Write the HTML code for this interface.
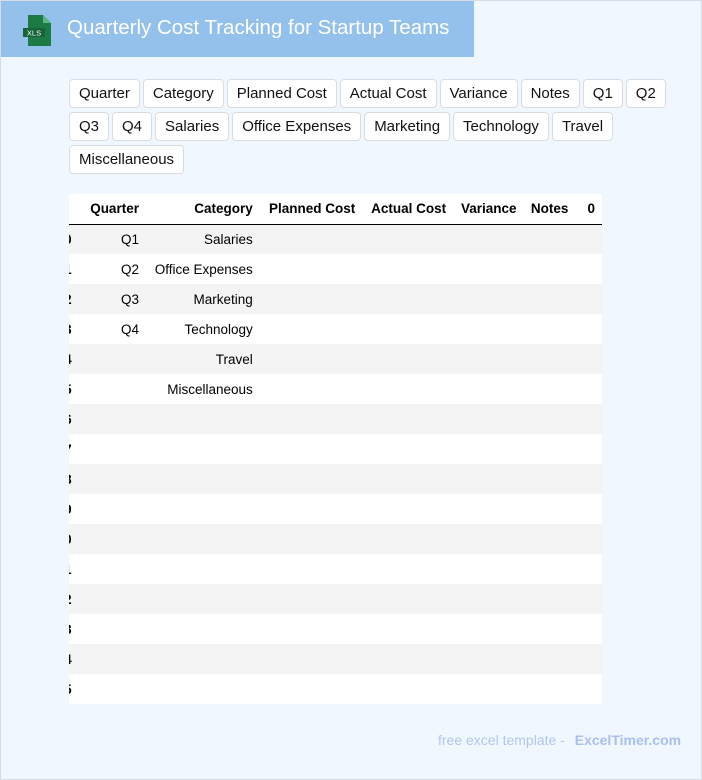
<!DOCTYPE html>
<html><head><meta charset="utf-8"><style>
*{box-sizing:border-box;margin:0;padding:0}
body{width:702px;height:780px;background:#f0f7ff;font-family:"Liberation Sans",Arial,sans-serif;position:relative;overflow:hidden;border:1px solid #d6dde6}
.hdr{position:absolute;left:0;top:0;width:473px;height:56px;background:#93c1ec}
.hdr .t{position:absolute;left:66px;top:15px;font-size:20.5px;color:#fff;white-space:nowrap}
.chips{position:absolute;left:68px;top:78px;width:610px;display:flex;flex-wrap:wrap;gap:4px 3px}
.chip{height:29px;line-height:27px;padding:0 9px;border:1px solid #d8dde3;border-radius:4px;background:#fff;font-size:15px;color:#111}
.wrap{position:absolute;left:68px;top:193px;width:533px;overflow:hidden}
table{border-collapse:collapse;margin-left:-23px;font-size:13.5px;table-layout:fixed}
td,th{height:30px;padding:0 7px;text-align:right;white-space:nowrap;color:#000;background:#fff}
th{font-weight:bold;border-bottom:1px solid #000}
tr.g td{background:#f4f4f4}
td:first-child{font-weight:bold;padding-right:3px}
.ft{position:absolute;left:437px;top:731px;font-size:14px;color:#b3c6ee}
.ft b{color:#a9c0ee;margin-left:6px}
</style></head><body>
<div class="hdr">
<svg style="position:absolute;left:20px;top:13px" width="32" height="33" viewBox="0 0 32 33"><path d="M7 1h15l8 8v23H7z" fill="#1e7a45"/><path d="M22 1v8h8z" fill="#5cb585"/><rect x="2" y="14" width="22" height="9" fill="#17633a"/><text x="13" y="21.5" font-size="7.5" fill="#fff" text-anchor="middle" font-family="Liberation Sans">XLS</text></svg>
<div class="t">Quarterly Cost Tracking for Startup Teams</div></div>
<div class="chips">
<span class="chip">Quarter</span><span class="chip">Category</span><span class="chip">Planned Cost</span><span class="chip">Actual Cost</span><span class="chip">Variance</span><span class="chip">Notes</span><span class="chip">Q1</span><span class="chip">Q2</span>
<span class="chip">Q3</span><span class="chip">Q4</span><span class="chip">Salaries</span><span class="chip">Office Expenses</span><span class="chip">Marketing</span><span class="chip">Technology</span><span class="chip">Travel</span>
<span class="chip">Miscellaneous</span></div>
<div class="wrap"><table>
<colgroup><col style="width:31px"><col style="width:77px"><col style="width:115px"><col style="width:104px"><col style="width:92px"><col style="width:71px"><col style="width:52px"><col style="width:30px"></colgroup>
<tr><th></th><th>Quarter</th><th>Category</th><th>Planned Cost</th><th>Actual Cost</th><th>Variance</th><th>Notes</th><th>0</th></tr>
<tr class="g"><td>0</td><td>Q1</td><td>Salaries</td><td></td><td></td><td></td><td></td><td></td></tr>
<tr><td>1</td><td>Q2</td><td>Office Expenses</td><td></td><td></td><td></td><td></td><td></td></tr>
<tr class="g"><td>2</td><td>Q3</td><td>Marketing</td><td></td><td></td><td></td><td></td><td></td></tr>
<tr><td>3</td><td>Q4</td><td>Technology</td><td></td><td></td><td></td><td></td><td></td></tr>
<tr class="g"><td>4</td><td></td><td>Travel</td><td></td><td></td><td></td><td></td><td></td></tr>
<tr><td>5</td><td></td><td>Miscellaneous</td><td></td><td></td><td></td><td></td><td></td></tr>
<tr class="g"><td>6</td><td></td><td></td><td></td><td></td><td></td><td></td><td></td></tr>
<tr><td>7</td><td></td><td></td><td></td><td></td><td></td><td></td><td></td></tr>
<tr class="g"><td>8</td><td></td><td></td><td></td><td></td><td></td><td></td><td></td></tr>
<tr><td>9</td><td></td><td></td><td></td><td></td><td></td><td></td><td></td></tr>
<tr class="g"><td>10</td><td></td><td></td><td></td><td></td><td></td><td></td><td></td></tr>
<tr><td>11</td><td></td><td></td><td></td><td></td><td></td><td></td><td></td></tr>
<tr class="g"><td>12</td><td></td><td></td><td></td><td></td><td></td><td></td><td></td></tr>
<tr><td>13</td><td></td><td></td><td></td><td></td><td></td><td></td><td></td></tr>
<tr class="g"><td>14</td><td></td><td></td><td></td><td></td><td></td><td></td><td></td></tr>
<tr><td>15</td><td></td><td></td><td></td><td></td><td></td><td></td><td></td></tr>
</table></div>
<div class="ft">free excel template - <b>ExcelTimer.com</b></div>
</body></html>
